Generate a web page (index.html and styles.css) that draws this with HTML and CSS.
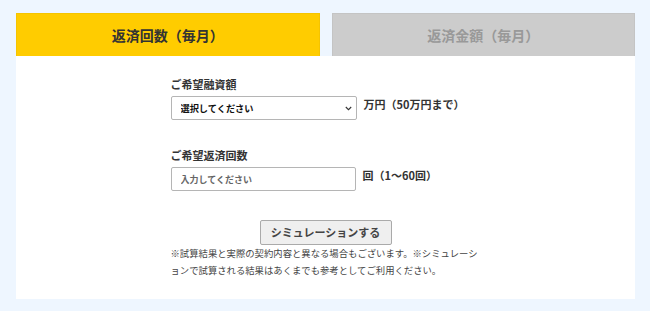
FILE: index.html
```html
<!DOCTYPE html>
<html lang="ja">
<head>
<meta charset="utf-8">
<title>返済シミュレーション</title>
<link rel="stylesheet" href="styles.css">
</head>
<body>
<div class="page">
  <div class="tabs">
    <div class="tab tab-active">返済回数（毎月）</div>
    <div class="tab tab-inactive">返済金額（毎月）</div>
  </div>
  <div class="panel">
    <div class="form">
      <div class="field">
        <div class="label">ご希望融資額</div>
        <div class="row">
          <div class="select-wrap">
            <select class="select">
              <option>選択してください</option>
            </select>
            <svg class="chev" width="7" height="5" viewBox="0 0 7 5"><path d="M0.8 1 L3.5 3.7 L6.2 1" fill="none" stroke="#333" stroke-width="1.1"/></svg>
          </div>
          <span class="unit">万円（50万円まで）</span>
        </div>
      </div>
      <div class="field field-2">
        <div class="label">ご希望返済回数</div>
        <div class="row">
          <input class="input" type="text" placeholder="入力してください">
          <span class="unit">回（1～60回）</span>
        </div>
      </div>
      <div class="actions">
        <button class="btn" type="button">シミュレーションする</button>
      </div>
      <p class="note">※試算結果と実際の契約内容と異なる場合もございます。※シミュレーションで試算される結果はあくまでも参考としてご利用ください。</p>
    </div>
  </div>
</div>
</body>
</html>
```
FILE: styles.css
```css
html, body {
  margin: 0;
  padding: 0;
  background: #eef6ff;
  font-family: "Noto Sans CJK JP", "Noto Sans", sans-serif;
  color: #333;
}
.page {
  padding: 13px 15px 0 16px;
}
.tabs {
  display: flex;
  gap: 12px;
}
.tab {
  flex: 1;
  height: 43px;
  box-sizing: border-box;
  display: flex;
  align-items: center;
  justify-content: center;
  font-size: 14px;
  font-weight: bold;
  line-height: 1;
  border: 1px solid rgba(0, 0, 0, 0.04);
  border-bottom: none;
}
.tab-active {
  background: #ffcc00;
  color: #333;
}
.tab-inactive {
  background: #cccccc;
  color: #999;
}
.panel {
  background: #fff;
  padding: 20px 0 21px;
}
.form {
  width: 310px;
  margin: 0 auto;
}
.label {
  font-size: 11px;
  line-height: 16px;
  font-weight: bold;
  margin-bottom: 4px;
}
.field-2 {
  margin-top: 27px;
}
.row {
  display: flex;
  align-items: center;
  gap: 7px;
}
.select-wrap {
  position: relative;
  width: 186px;
  height: 24px;
}
.select {
  display: block;
  appearance: none;
  -webkit-appearance: none;
  width: 186px;
  height: 24px;
  box-sizing: border-box;
  border: 1px solid #b5b5b5;
  border-radius: 2px;
  background: #fff;
  padding: 0 0 0 9px;
  margin: 0;
  font-family: inherit;
  font-size: 9.2px;
  font-weight: bold;
  color: #111;
  outline: none;
}
.chev {
  position: absolute;
  right: 5px;
  top: 10px;
}
.input {
  display: block;
  width: 185px;
  height: 24px;
  box-sizing: border-box;
  border: 1px solid #b5b5b5;
  border-radius: 2px;
  padding: 0 0 0 9px;
  margin: 0;
  font-family: inherit;
  font-size: 9px;
  font-weight: bold;
  outline: none;
}
.input::placeholder {
  color: #666;
}
.unit {
  font-size: 11px;
  font-weight: bold;
  line-height: 16px;
  margin-top: -9px;
}
.actions {
  margin-top: 29px;
  display: flex;
  justify-content: center;
}
.btn {
  width: 132px;
  height: 25px;
  box-sizing: border-box;
  background: #efefef;
  border: 1px solid #aaa;
  border-radius: 2px;
  font-family: inherit;
  font-size: 11px;
  font-weight: bold;
  color: #444;
  padding: 0;
  line-height: 1;
}
.note {
  margin: 0;
  font-size: 9.35px;
  line-height: 16.5px;
  color: #444;
}
```
